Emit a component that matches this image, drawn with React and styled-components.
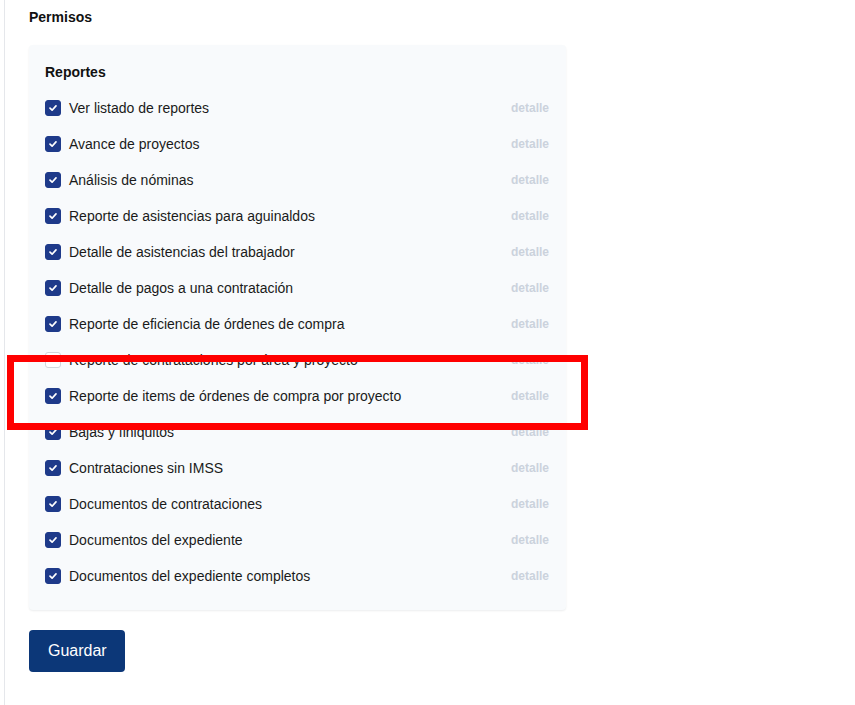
import styled, { createGlobalStyle } from "styled-components";

const GlobalStyle = createGlobalStyle`
  html, body {
    margin: 0;
    padding: 0;
    background: #ffffff;
    font-family: "Liberation Sans", Arial, sans-serif;
    color: #111827;
  }
`;

const reportes = [
  { label: "Ver listado de reportes", checked: true },
  { label: "Avance de proyectos", checked: true },
  { label: "Análisis de nóminas", checked: true },
  { label: "Reporte de asistencias para aguinaldos", checked: true },
  { label: "Detalle de asistencias del trabajador", checked: true },
  { label: "Detalle de pagos a una contratación", checked: true },
  { label: "Reporte de eficiencia de órdenes de compra", checked: true },
  { label: "Reporte de contrataciones por área y proyecto", checked: false },
  { label: "Reporte de items de órdenes de compra por proyecto", checked: true },
  { label: "Bajas y finiquitos", checked: true },
  { label: "Contrataciones sin IMSS", checked: true },
  { label: "Documentos de contrataciones", checked: true },
  { label: "Documentos del expediente", checked: true },
  { label: "Documentos del expediente completos", checked: true },
];

export default function App() {
  return (
    <>
      <GlobalStyle />
      <Page>
        <Title>Permisos</Title>
        <Card>
          <CardTitle>Reportes</CardTitle>
          <List>
            {reportes.map((r) => (
              <Row key={r.label}>
                <Box $checked={r.checked}>
                  {r.checked && (
                    <svg width="10" height="10" viewBox="0 0 10 10">
                      <path
                        d="M2 5.2 L4.1 7.2 L8 2.9"
                        fill="none"
                        stroke="#fff"
                        strokeWidth="1.7"
                        strokeLinecap="round"
                        strokeLinejoin="round"
                      />
                    </svg>
                  )}
                </Box>
                <Label>{r.label}</Label>
                <Detail>detalle</Detail>
              </Row>
            ))}
          </List>
        </Card>
        <SaveButton>Guardar</SaveButton>
        <Highlight />
      </Page>
    </>
  );
}

const Page = styled.div`
  position: relative;
  min-height: 705px;
  box-sizing: border-box;
  margin-left: 4px;
  border-left: 1px solid #e5e7eb;
  padding: 9px 0 0 24px;
`;

const Title = styled.h2`
  margin: 0;
  font-size: 14px;
  font-weight: 700;
  line-height: 16px;
  color: #111111;
`;

const Card = styled.div`
  margin-top: 20px;
  width: 537px;
  box-sizing: border-box;
  background: #f8fafc;
  border-radius: 4px;
  box-shadow: 0 1px 2px rgba(15, 23, 42, 0.08);
  padding: 19px 16px 16px 16px;
`;

const CardTitle = styled.h3`
  margin: 0;
  font-size: 14px;
  font-weight: 700;
  line-height: 16px;
  color: #111111;
`;

const List = styled.div`
  margin-top: 10px;
  display: flex;
  flex-direction: column;
`;

const Row = styled.label`
  display: flex;
  align-items: center;
  height: 36px;
`;

const Box = styled.span`
  width: 16px;
  height: 16px;
  flex: none;
  box-sizing: border-box;
  border-radius: 3px;
  display: flex;
  align-items: center;
  justify-content: center;
  background: ${(p) => (p.$checked ? "#1e3a8a" : "#ffffff")};
  border: 1px solid ${(p) => (p.$checked ? "#1e3a8a" : "#d1d5db")};
`;

const Label = styled.span`
  margin-left: 8px;
  font-size: 14px;
  color: #1a1a1a;
  flex: 1;
`;

const Detail = styled.span`
  font-size: 12px;
  font-weight: 700;
  color: #cbd2dc;
  margin-right: 1px;
`;

const SaveButton = styled.button`
  margin-top: 20px;
  height: 42px;
  padding: 0 18px 0 19px;
  border: none;
  border-radius: 4px;
  background: #0c3778;
  color: #ffffff;
  font-family: "Liberation Sans", Arial, sans-serif;
  font-size: 16px;
`;

const Highlight = styled.div`
  position: absolute;
  left: 2px;
  top: 355px;
  width: 581px;
  height: 75px;
  box-sizing: border-box;
  border: 7px solid #ff0000;
  pointer-events: none;
`;
